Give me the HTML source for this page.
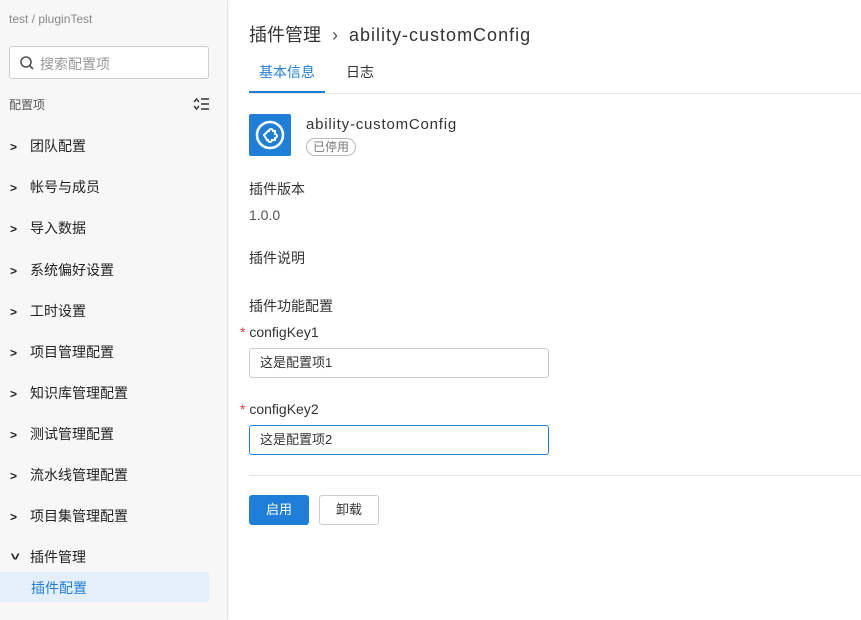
<!DOCTYPE html>
<html><head><meta charset="utf-8"><style>
*{margin:0;padding:0;box-sizing:border-box}
body{width:861px;height:620px;overflow:hidden;font-family:"Liberation Sans","Noto Sans CJK SC",sans-serif;color:#333;background:#fff;position:relative}
.side{position:absolute;left:0;top:0;width:228px;height:620px;background:#f7f7f7;border-right:1px solid #e6e6e6;box-shadow:1px 0 3px rgba(0,0,0,.06)}
.a{position:absolute;white-space:nowrap}
.mi{position:absolute;left:10px;font-size:14px;color:#222}
.mi span{display:inline-block;width:20px;color:#222;font-size:12px;font-weight:bold}
</style></head><body>
<div class="side">
<div class="a" style="left:9px;top:12px;font-size:12px;color:#888">test / pluginTest</div>
<div class="a" style="left:9px;top:46px;width:200px;height:33px;border:1px solid #ccc;border-radius:3px;background:#fff"></div>
<svg class="a" style="left:19px;top:55px" width="16" height="16" viewBox="0 0 16 16"><circle cx="7" cy="7" r="5" fill="none" stroke="#555" stroke-width="1.6"/><path d="M10.5 10.5L14 14" stroke="#555" stroke-width="1.8"/></svg>
<div class="a" style="left:40px;top:54px;font-size:14px;color:#999">搜索配置项</div>
<div class="a" style="left:9px;top:96px;font-size:12px;color:#555">配置项</div>
<svg class="a" style="left:192px;top:97px" width="18" height="14" viewBox="0 0 18 14"><path d="M2 5l2.5-3L7 5M2 9l2.5 3L7 9" fill="none" stroke="#333" stroke-width="1.4"/><path d="M9 2h8M9 7h8M9 12h8" stroke="#333" stroke-width="1.6"/></svg>
<div class="mi" style="top:136px"><span>&gt;</span>团队配置</div>
<div class="mi" style="top:177px"><span>&gt;</span>帐号与成员</div>
<div class="mi" style="top:218px"><span>&gt;</span>导入数据</div>
<div class="mi" style="top:260px"><span>&gt;</span>系统偏好设置</div>
<div class="mi" style="top:301px"><span>&gt;</span>工时设置</div>
<div class="mi" style="top:342px"><span>&gt;</span>项目管理配置</div>
<div class="mi" style="top:383px"><span>&gt;</span>知识库管理配置</div>
<div class="mi" style="top:424px"><span>&gt;</span>测试管理配置</div>
<div class="mi" style="top:465px"><span>&gt;</span>流水线管理配置</div>
<div class="mi" style="top:506px"><span>&gt;</span>项目集管理配置</div>
<div class="mi" style="top:547px"><span style="transform:rotate(90deg) scaleY(1.3);width:10px;margin-right:10px">&gt;</span>插件管理</div>
<div class="a" style="left:0;top:572px;width:209px;height:30px;background:#e4effb"></div>
<div class="a" style="left:31px;top:578px;font-size:14px;color:#1f7fd8">插件配置</div>
</div>

<div class="a" style="left:249px;top:21px;font-size:18px;color:#333">插件管理 <span style="color:#555;margin:0 6px">›</span> <span style="letter-spacing:1px">ability-customConfig</span></div>
<div class="a" style="left:259px;top:62px;font-size:14px;color:#1f7fd8">基本信息</div>
<div class="a" style="left:346px;top:62px;font-size:14px;color:#333">日志</div>
<div class="a" style="left:249px;top:91px;width:76px;height:2px;background:#1f7fd8"></div>
<div class="a" style="left:249px;top:93px;width:612px;height:1px;background:#e6e6e6"></div>
<div class="a" style="left:249px;top:114px;width:42px;height:42px;background:#1f7fd8;border-radius:2px"></div>
<svg class="a" style="left:249px;top:114px" width="42" height="42" viewBox="0 0 42 42"><circle cx="21" cy="21" r="13" fill="none" stroke="#fff" stroke-width="2.5"/><path d="M15 21l4-4h1a2 2 0 014 0h2v3a2 2 0 010 4v2h-3a2 2 0 01-4 0h-1z" fill="none" stroke="#fff" stroke-width="2"/></svg>
<div class="a" style="left:306px;top:116px;font-size:15px;color:#333;letter-spacing:0.8px">ability-customConfig</div>
<div class="a" style="left:306px;top:138px;height:18px;padding:0 6px;border:1px solid #bbb;border-radius:9px;font-size:12px;line-height:16px;color:#777">已停用</div>
<div class="a" style="left:249px;top:179px;font-size:14px;color:#333">插件版本</div>
<div class="a" style="left:249px;top:207px;font-size:14px;color:#555">1.0.0</div>
<div class="a" style="left:249px;top:248px;font-size:14px;color:#333">插件说明</div>
<div class="a" style="left:249px;top:296px;font-size:14px;color:#333">插件功能配置</div>
<div class="a" style="left:240px;top:324px;font-size:14px;color:#333"><span style="color:#e33">*</span> configKey1</div>
<div class="a" style="left:249px;top:348px;width:300px;height:30px;border:1px solid #ccc;border-radius:3px;font-size:13px;line-height:28px;padding-left:10px;color:#333">这是配置项1</div>
<div class="a" style="left:240px;top:401px;font-size:14px;color:#333"><span style="color:#e33">*</span> configKey2</div>
<div class="a" style="left:249px;top:425px;width:300px;height:30px;border:1px solid #1f7fd8;border-radius:3px;font-size:13px;line-height:28px;padding-left:10px;color:#333">这是配置项2</div>
<div class="a" style="left:249px;top:475px;width:612px;height:1px;background:#e6e6e6"></div>
<div class="a" style="left:249px;top:495px;width:60px;height:30px;background:#1f7fd8;border-radius:3px;color:#fff;font-size:13px;line-height:30px;text-align:center">启用</div>
<div class="a" style="left:319px;top:495px;width:60px;height:30px;border:1px solid #ccc;border-radius:3px;color:#333;font-size:13px;line-height:28px;text-align:center">卸载</div>
</body></html>
